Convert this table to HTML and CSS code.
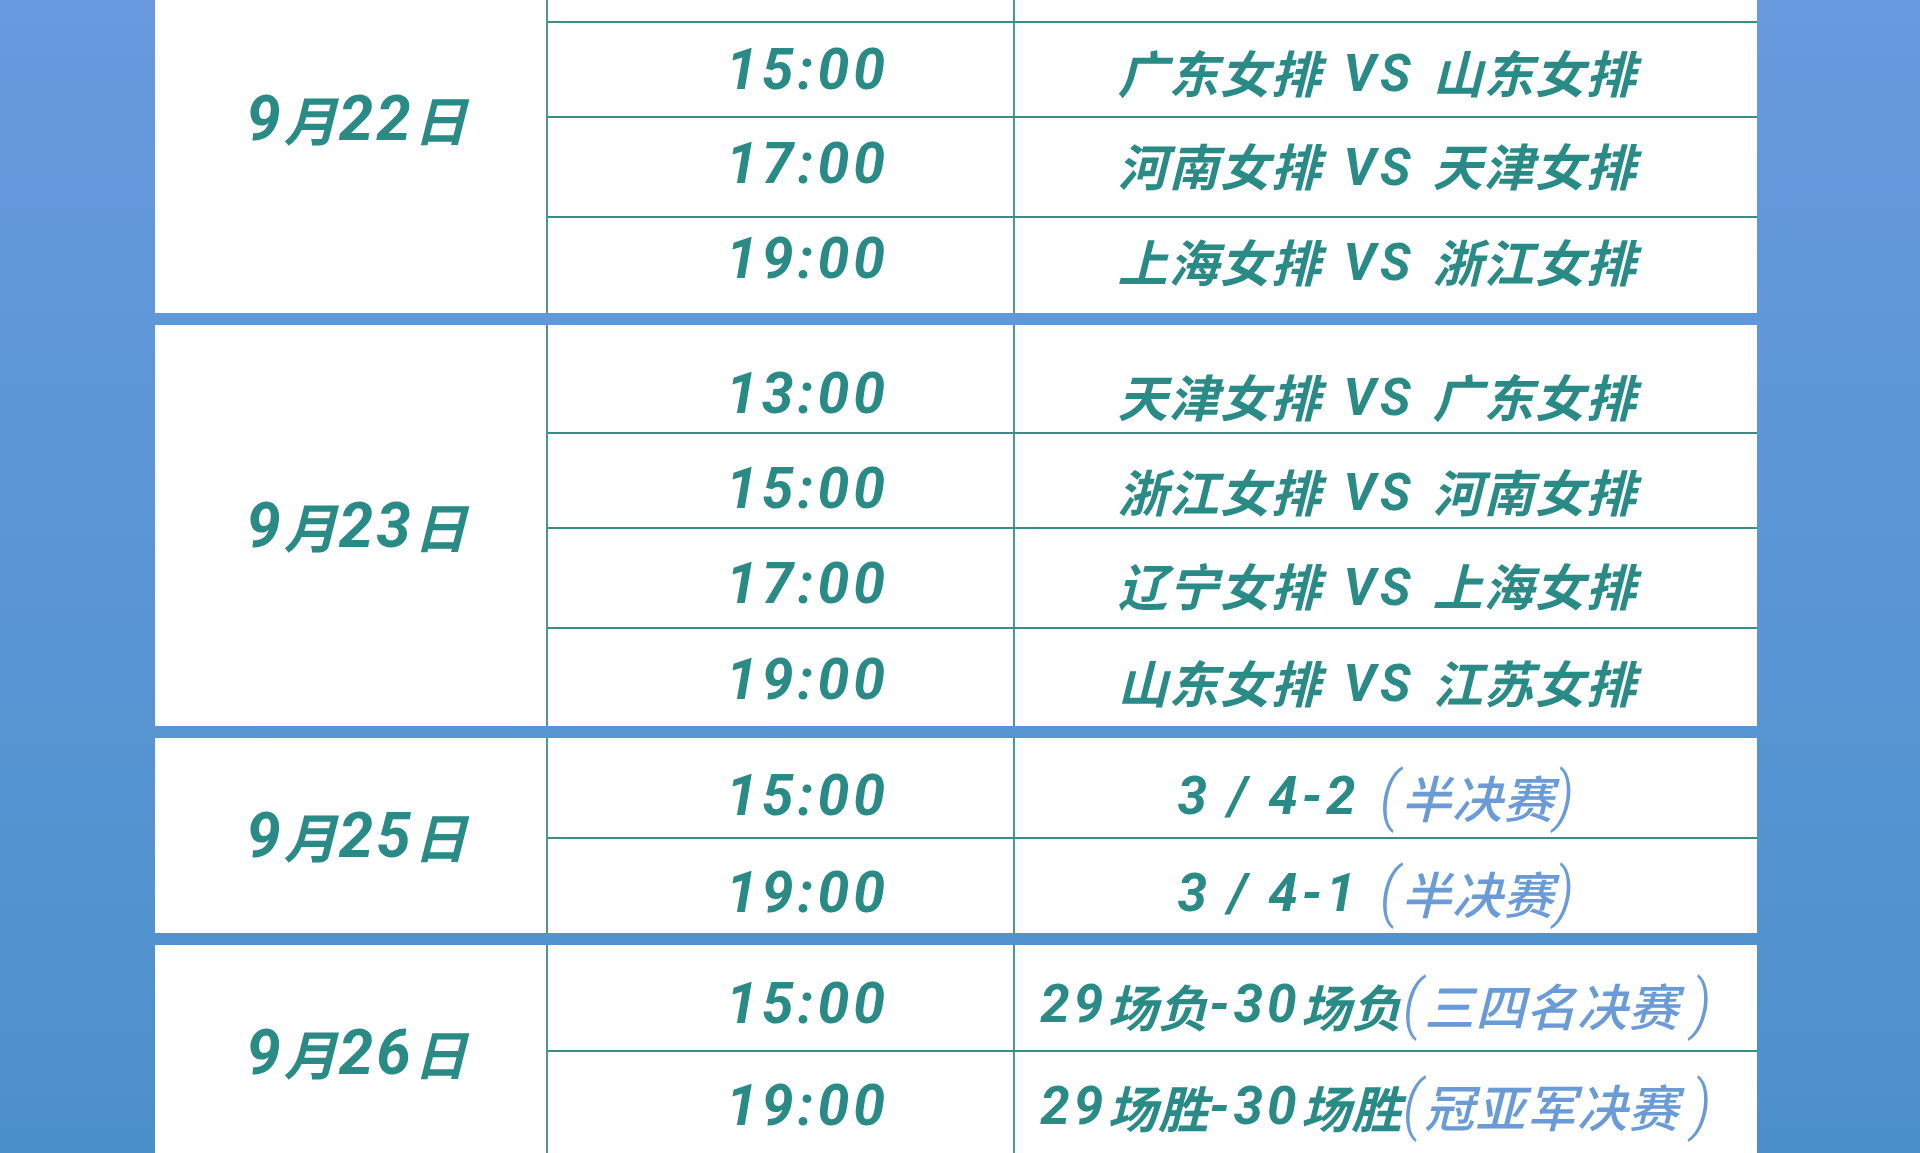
FILE: index.html
```html
<!DOCTYPE html>
<html lang="zh-CN">
<head>
<meta charset="utf-8">
<title>女排赛程</title>
<link rel="stylesheet" href="styles.css">
</head>
<body>
<main class="schedule">
  <section class="day">
    <div class="date"><span class="d">9</span>月<span class="d">22</span>日</div>
    <div class="matches">
      <div class="row h97 up9"><div class="time">13:00</div><div class="match">辽宁女排<span class="vs">VS</span>江苏女排</div></div>
      <div class="row h95 up2"><div class="time">15:00</div><div class="match">广东女排<span class="vs">VS</span>山东女排</div></div>
      <div class="row h100 up6"><div class="time">17:00</div><div class="match">河南女排<span class="vs">VS</span>天津女排</div></div>
      <div class="row h97 up9"><div class="time">19:00</div><div class="match">上海女排<span class="vs">VS</span>浙江女排</div></div>
    </div>
  </section>
  <section class="day">
    <div class="date"><span class="d">9</span>月<span class="d">23</span>日</div>
    <div class="matches">
      <div class="row h107 dn13"><div class="time">13:00</div><div class="match">天津女排<span class="vs">VS</span>广东女排</div></div>
      <div class="row h95 dn6"><div class="time">15:00</div><div class="match">浙江女排<span class="vs">VS</span>河南女排</div></div>
      <div class="row h100 dn3"><div class="time">17:00</div><div class="match">辽宁女排<span class="vs">VS</span>上海女排</div></div>
      <div class="row h99"><div class="time">19:00</div><div class="match">山东女排<span class="vs">VS</span>江苏女排</div></div>
    </div>
  </section>
  <section class="day">
    <div class="date"><span class="d">9</span>月<span class="d">25</span>日</div>
    <div class="matches">
      <div class="row h99 dn6"><div class="time">15:00</div><div class="match"><span class="d">3 / 4-2</span><span class="note"><span class="paren">(</span>半决赛<span class="paren">)</span></span></div></div>
      <div class="row h96 dn4"><div class="time">19:00</div><div class="match"><span class="d">3 / 4-1</span><span class="note"><span class="paren">(</span>半决赛<span class="paren">)</span></span></div></div>
    </div>
  </section>
  <section class="day">
    <div class="date"><span class="d">9</span>月<span class="d">26</span>日</div>
    <div class="matches">
      <div class="row h105 dn4"><div class="time">15:00</div><div class="match"><span class="d">29</span>场负<span class="d">-30</span>场负<span class="note tight"><span class="paren">(</span>三四名决赛 <span class="paren">)</span></span></div></div>
      <div class="row h110 up3"><div class="time">19:00</div><div class="match"><span class="d">29</span>场胜<span class="d">-30</span>场胜<span class="note tight"><span class="paren">(</span>冠亚军决赛 <span class="paren">)</span></span></div></div>
    </div>
  </section>
</main>
</body>
</html>
```

FILE: styles.css
```css
* {
  box-sizing: border-box;
}

html, body {
  margin: 0;
  padding: 0;
}

body {
  width: 1920px;
  height: 1153px;
  overflow: hidden;
  background: linear-gradient(180deg, #679ade 0%, #5b96d6 45%, #4c90cb 100%);
  font-family: "Roboto", "Noto Sans CJK SC", sans-serif;
  color: #2a8b86;
}

.schedule {
  width: 1602px;
  margin: -76px 0 0 155px;
  display: flex;
  flex-direction: column;
  gap: 12px;
}

.day {
  display: flex;
  background: #ffffff;
}

.date {
  width: 393px;
  flex: none;
  border-right: 2px solid #4a9793;
  display: flex;
  align-items: center;
  justify-content: center;
  font-family: "Noto Sans CJK SC", sans-serif;
  font-size: 53px;
  font-weight: 700;
  font-style: italic;
  letter-spacing: 2px;
  line-height: 1;
  padding-left: 14px;
}

.date .d {
  font-family: "Roboto", sans-serif;
  font-size: 62px;
  font-weight: 700;
  letter-spacing: 3px;
}

.matches {
  flex: 1;
  display: flex;
  flex-direction: column;
}

.row {
  display: flex;
  border-top: 2px solid #3b8c87;
}

.row:first-child {
  border-top: 0;
}

.h95 { height: 95px; }
.h96 { height: 96px; }
.h97 { height: 97px; }
.h99 { height: 99px; }
.h100 { height: 100px; }
.h105 { height: 105px; }
.h107 { height: 107px; }
.h110 { height: 110px; }

.time {
  width: 467px;
  flex: none;
  border-right: 2px solid #4a9793;
  display: flex;
  align-items: center;
  justify-content: center;
  padding-left: 54px;
  padding-top: 4px;
  font-family: "Roboto", sans-serif;
  font-size: 57px;
  font-weight: 700;
  font-style: italic;
  letter-spacing: 4px;
  line-height: 1;
}

.match {
  flex: 1;
  display: flex;
  align-items: center;
  justify-content: center;
  padding-right: 18px;
  padding-top: 6px;
  font-family: "Noto Sans CJK SC", sans-serif;
  font-size: 50px;
  font-weight: 700;
  font-style: italic;
  letter-spacing: 1px;
  line-height: 1;
  white-space: pre;
}

/* fine vertical placement of the row's text (applied on the cells so the column lines stay continuous) */
.up2 > div { padding-bottom: 4px; }
.up3 > div { padding-bottom: 6px; }
.up6 > div { padding-bottom: 12px; }
.up9 > div { padding-bottom: 18px; }
.dn3 > .time { padding-top: 10px; }
.dn3 > .match { padding-top: 12px; }
.dn4 > .time { padding-top: 12px; }
.dn4 > .match { padding-top: 14px; }
.dn6 > .time { padding-top: 16px; }
.dn6 > .match { padding-top: 18px; }
.dn13 > .time { padding-top: 30px; }
.dn13 > .match { padding-top: 32px; }

.match .vs {
  font-family: "Roboto", sans-serif;
  font-size: 51px;
  letter-spacing: 4px;
  margin: 0 18px 0 22px;
  position: relative;
  top: 3px;
}

.match .d {
  font-family: "Roboto", sans-serif;
  font-size: 53px;
  font-weight: 700;
  letter-spacing: 4px;
}

.note {
  color: #6a9bd7;
  font-weight: 500;
  margin-left: 20px;
}

.note.tight {
  margin-left: 0;
}

.paren {
  font-family: "Roboto", sans-serif;
  font-weight: 300;
  font-size: 64px;
  letter-spacing: 2px;
}
```
